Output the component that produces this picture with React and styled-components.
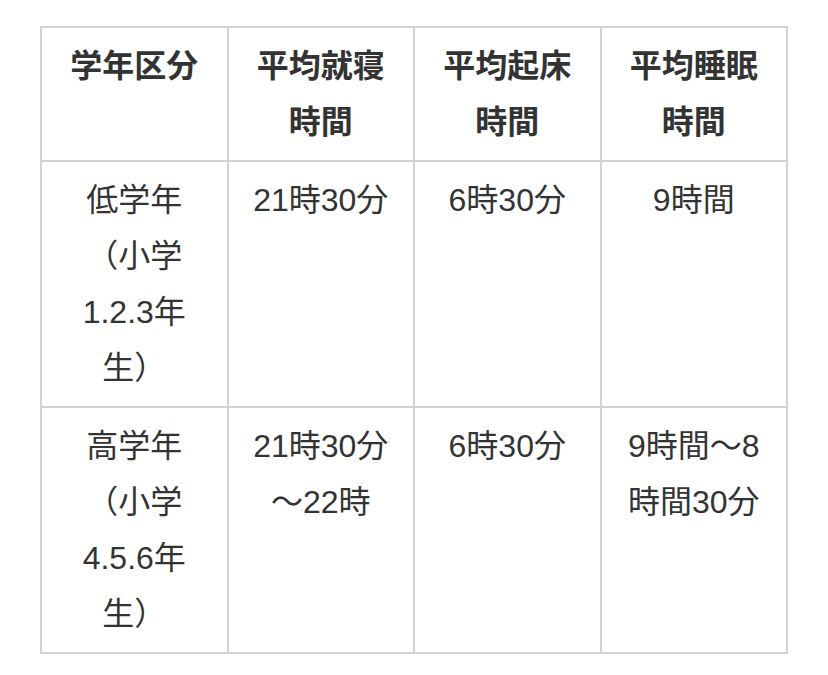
import React from "react";
import styled, { createGlobalStyle } from "styled-components";

const GlobalStyle = createGlobalStyle`
  body {
    margin: 0;
    background: #ffffff;
    font-family: "Liberation Sans", "Noto Sans CJK JP", sans-serif;
    color: #333333;
  }
`;

const Page = styled.div`
  padding: 26px 40px;
`;

const SleepTable = styled.table`
  width: 748px;
  table-layout: fixed;
  border-collapse: collapse;
  border: 2px solid #d2d2d2;
  font-size: 32px;
  line-height: 56px;
`;

const HeadCell = styled.th`
  border: 2px solid #d2d2d2;
  padding: 10px 22px;
  font-weight: 700;
  text-align: center;
  vertical-align: top;
  color: #333333;
`;

const Cell = styled.td`
  border: 2px solid #d2d2d2;
  padding: 10px 22px;
  text-align: center;
  vertical-align: top;
  color: #333333;
  line-break: loose;
`;

const heads = ["学年区分", "平均就寝時間", "平均起床時間", "平均睡眠時間"];

// "|" marks a spot where a line may break
const rows = [
  ["低学年\n（小学1.2.3年生）", "21時30分", "6時30分", "9時間"],
  ["高学年\n（小学4.5.6年生）", "21時30分|〜22時", "6時30分", "9時間〜8時間30分"],
];

const renderText = (val) =>
  val.split("\n").map((line, i) => (
    <React.Fragment key={i}>
      {i > 0 && <br />}
      {line.split("|").map((part, k) => (
        <React.Fragment key={k}>
          {k > 0 && <wbr />}
          {part}
        </React.Fragment>
      ))}
    </React.Fragment>
  ));

const App = () => {
  return (
    <>
      <GlobalStyle />
      <Page>
        <SleepTable>
          <thead>
            <tr>
              {heads.map((h) => (
                <HeadCell key={h}>{h}</HeadCell>
              ))}
            </tr>
          </thead>
          <tbody>
            {rows.map((row, i) => (
              <tr key={i}>
                {row.map((val, j) => (
                  <Cell key={j}>{renderText(val)}</Cell>
                ))}
              </tr>
            ))}
          </tbody>
        </SleepTable>
      </Page>
    </>
  );
};

export default App;
